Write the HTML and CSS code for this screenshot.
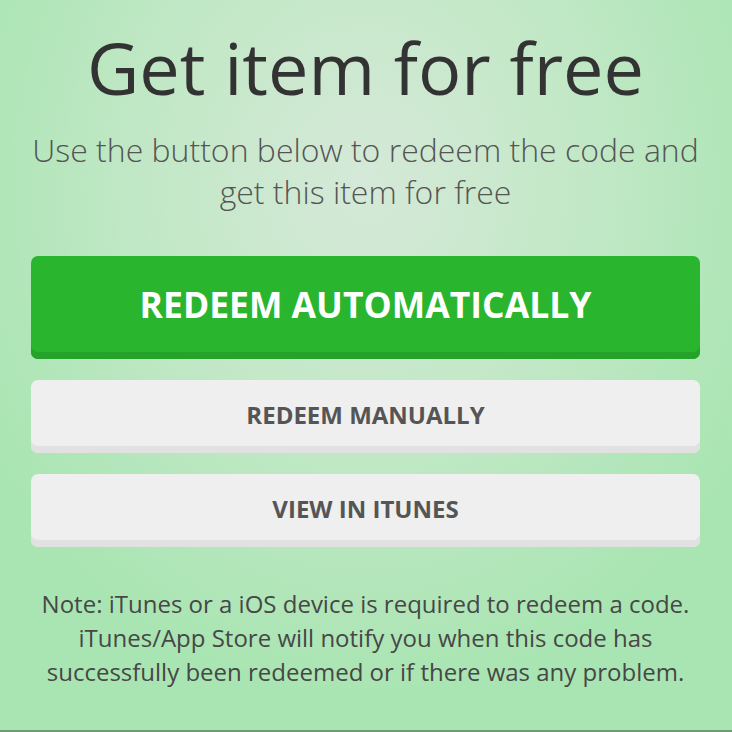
FILE: index.html
```html
<!DOCTYPE html>
<html>
<head>
<meta charset="utf-8">
<link rel="stylesheet" href="styles.css">
</head>
<body>
<main class="page">
  <h1 class="title">Get item for free</h1>
  <p class="lead">Use the button below to redeem the code and get this item for free</p>
  <div class="actions">
    <a class="btn btn-primary">REDEEM AUTOMATICALLY</a>
    <a class="btn btn-secondary">REDEEM MANUALLY</a>
    <a class="btn btn-secondary">VIEW IN ITUNES</a>
  </div>
  <p class="note">Note: iTunes or a iOS device is required to redeem a code. iTunes/App Store will notify you when this code has successfully been redeemed or if there was any problem.</p>
</main>
</body>
</html>
```
FILE: styles.css
```css
html, body {
  margin: 0;
  padding: 0;
  height: 100%;
}
body {
  font-family: "Open Sans", "Noto Sans", sans-serif;
  background: radial-gradient(ellipse 60% 70% at 50% 25%, #d5e9d8 0%, #c4e8c8 45%, #a9e5b2 100%);
  border-bottom: 2px solid #6f9a74;
  box-sizing: border-box;
  overflow: hidden;
}
.page {
  padding: 22px 32px 0 31px;
  display: flex;
  flex-direction: column;
  align-items: stretch;
}
.title {
  margin: 0;
  text-align: center;
  font-weight: 400;
  font-size: 72px;
  line-height: 90px;
  color: #333;
}
.lead {
  margin: 17px 0 0;
  text-align: center;
  font-weight: 300;
  font-size: 32px;
  line-height: 42px;
  color: #555;
}
.actions {
  margin-top: 43px;
  display: flex;
  flex-direction: column;
  gap: 21px;
}
.btn {
  display: flex;
  align-items: center;
  justify-content: center;
  border-radius: 7px;
  font-weight: 700;
  text-decoration: none;
  box-sizing: border-box;
}
.btn-primary {
  height: 103px;
  background: #2ab52f;
  box-shadow: inset 0 -7px 0 #24a229;
  color: #fff;
  font-size: 35.5px;
  padding-bottom: 7px;
}
.btn-secondary {
  height: 73px;
  background: #efefef;
  box-shadow: inset 0 -7px 0 #e1e1e1;
  color: #555;
  font-size: 24px;
  padding-bottom: 5px;
}
.note {
  margin: 40px 0 0;
  text-align: center;
  font-size: 24px;
  line-height: 34px;
  color: #474747;
}
```
